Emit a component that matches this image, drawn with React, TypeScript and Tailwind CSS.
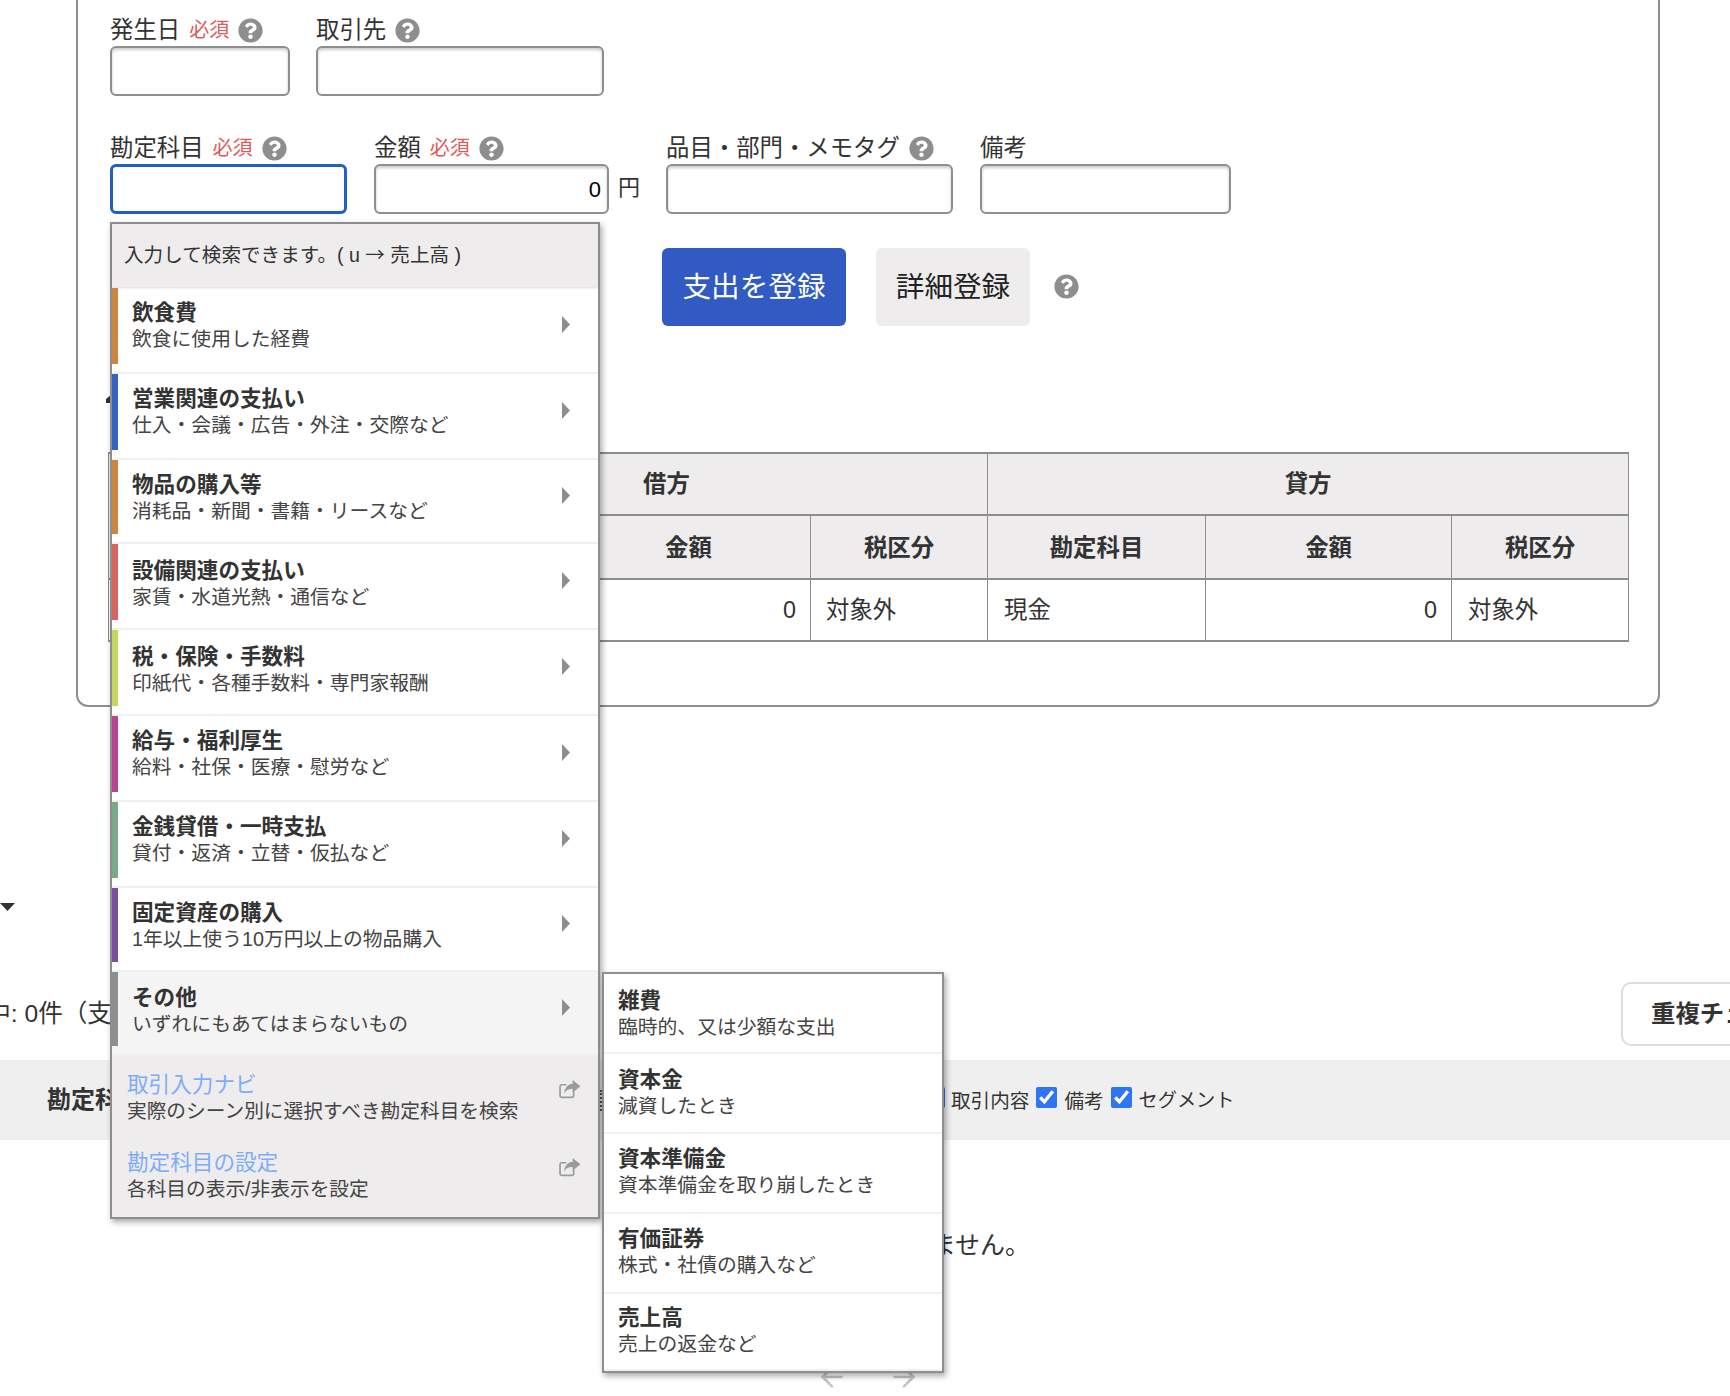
import React from 'react';
import { ArrowLeft, ArrowRight } from 'lucide-react';
import { FaQuestionCircle } from 'react-icons/fa';

const categories = [
  { title: '飲食費', desc: '飲食に使用した経費', bar: 'bg-[#cd853f]', h: 'h-[86px]', pt: 'pt-[12px]' },
  { title: '営業関連の支払い', desc: '仕入・会議・広告・外注・交際など', bar: 'bg-[#3560c6]', h: 'h-[86px]', pt: 'pt-[12px]' },
  { title: '物品の購入等', desc: '消耗品・新聞・書籍・リースなど', bar: 'bg-[#cd853f]', h: 'h-[84px]', pt: 'pt-[12px]' },
  { title: '設備関連の支払い', desc: '家賃・水道光熱・通信など', bar: 'bg-[#d9625e]', h: 'h-[86px]', pt: 'pt-[14px]' },
  { title: '税・保険・手数料', desc: '印紙代・各種手数料・専門家報酬', bar: 'bg-[#c5d65f]', h: 'h-[86px]', pt: 'pt-[14px]' },
  { title: '給与・福利厚生', desc: '給料・社保・医療・慰労など', bar: 'bg-[#b8458f]', h: 'h-[86px]', pt: 'pt-[12px]' },
  { title: '金銭貸借・一時支払', desc: '貸付・返済・立替・仮払など', bar: 'bg-[#7aa987]', h: 'h-[86px]', pt: 'pt-[12px]' },
  { title: '固定資産の購入', desc: '1年以上使う10万円以上の物品購入', bar: 'bg-[#7a4fa0]', h: 'h-[84px]', pt: 'pt-[12px]' },
  { title: 'その他', desc: 'いずれにもあてはまらないもの', bar: 'bg-[#8e8e8e]', h: 'h-[84px]', pt: 'pt-[13px]', active: true },
];

const subItems = [
  { title: '雑費', desc: '臨時的、又は少額な支出', pt: 'pt-[14px]' },
  { title: '資本金', desc: '減資したとき', pt: 'pt-[13px]' },
  { title: '資本準備金', desc: '資本準備金を取り崩したとき', pt: 'pt-[12px]' },
  { title: '有価証券', desc: '株式・社債の購入など', pt: 'pt-[12px]' },
  { title: '売上高', desc: '売上の返金など', pt: 'pt-[11px]' },
];

const Help = () => <FaQuestionCircle size={25} className="shrink-0 text-[#8e8e8e]" />;

const ShareIcon = () => (
  <svg width="22" height="19" viewBox="0 0 21 18" className="mt-[9px] shrink-0 text-[#9b9b9b]">
    <path d="M14 11v4a1.5 1.5 0 0 1-1.5 1.5h-10A1.5 1.5 0 0 1 1 15V6a1.5 1.5 0 0 1 1.5-1.5H7" fill="none" stroke="currentColor" strokeWidth="1.6" />
    <path d="M13 0L20.5 6L13 12V8.5C9 8.5 6.5 9.5 5 13C5 8 8 4 13 3.5Z" fill="currentColor" />
  </svg>
);

const Field = ({ label, required, help, className, children }: {
  label: string;
  required?: boolean;
  help?: boolean;
  className: string;
  children: React.ReactNode;
}) => (
  <div className={className}>
    <div className="flex h-[30px] items-center gap-[9px] whitespace-nowrap pb-[2px] text-[23.4px] leading-[28px]">
      <span>{label}</span>
      {required && <span className="text-[20px] text-[#e05a5a]">必須</span>}
      {help && <Help />}
    </div>
    {children}
  </div>
);

const inputClass = 'block h-[50px] w-full rounded-[6px] border-2 border-[#8e8e8e] bg-white shadow-[inset_0_2px_3px_rgba(0,0,0,0.2)]';

const th = 'border-x border-y-2 border-[#8e8e8e] bg-[#eeeced] pt-[2px] text-center text-[23.4px] font-bold';
const td = 'border-x border-y-2 border-[#8e8e8e] pt-[2px] text-[23.4px] font-normal';

const App: React.FC = () => {
  return (
    <div className="relative h-[1396px] w-[1730px] overflow-hidden bg-white font-['Liberation_Sans','Noto_Sans_CJK_JP',sans-serif] text-[#333]">
      <div className="ml-[76px] h-[707px] w-[1584px] rounded-b-[12px] border-x-2 border-b-2 border-[#8e8e8e] pl-[32px] pt-[16px]">
        <div className="flex gap-[26px]">
          <Field label="発生日" required help className="w-[180px]">
            <input className={inputClass} />
          </Field>
          <Field label="取引先" help className="w-[288px]">
            <input className={inputClass} />
          </Field>
        </div>

        <div className="mt-[38px] flex">
          <Field label="勘定科目" required help className="w-[237px]">
            <input className="block h-[50px] w-full rounded-[6px] border-[3px] border-[#215fc7] bg-white" />
          </Field>
          <Field label="金額" required help className="ml-[27px] w-[264px]">
            <div className="flex items-center whitespace-nowrap">
              <input
                readOnly
                value="0"
                className={`${inputClass} !w-[235px] shrink-0 pr-[6px] pt-[1px] text-right text-[22px] text-black`}
              />
              <span className="mb-[4px] ml-[9px] text-[22px]">円</span>
            </div>
          </Field>
          <Field label="品目・部門・メモタグ" help className="ml-[28px] w-[287px]">
            <input className={inputClass} />
          </Field>
          <Field label="備考" className="ml-[27px] w-[251px]">
            <input className={inputClass} />
          </Field>
        </div>

        <div className="ml-[552px] mt-[34px] flex h-[78px] items-center">
          <button className="h-full w-[184px] rounded-[6px] bg-[#315bc3] text-[28.6px] text-white">支出を登録</button>
          <button className="ml-[30px] h-full w-[154px] rounded-[6px] bg-[#eeeced] text-[28.6px] text-[#222]">詳細登録</button>
          <span className="mb-[2px] ml-[24px]"><Help /></span>
        </div>

        <table className="ml-[-2px] mt-[126px] w-[1520px] table-fixed border-collapse">
          <colgroup>
            <col className="w-[237px]" />
            <col className="w-[221px]" />
            <col className="w-[244px]" />
            <col className="w-[177px]" />
            <col className="w-[218px]" />
            <col className="w-[246px]" />
            <col className="w-[177px]" />
          </colgroup>
          <thead>
            <tr className="h-[62px]">
              <th rowSpan={2} className={th} />
              <th colSpan={3} className={th}>借方</th>
              <th colSpan={3} className={th}>貸方</th>
            </tr>
            <tr className="h-[64px]">
              <th className={th} />
              <th className={`${th} !pt-[4px]`}>金額</th>
              <th className={`${th} !pt-[4px]`}>税区分</th>
              <th className={`${th} !pt-[4px]`}>勘定科目</th>
              <th className={`${th} !pt-[4px]`}>金額</th>
              <th className={`${th} !pt-[4px]`}>税区分</th>
            </tr>
          </thead>
          <tbody>
            <tr className="h-[62px]">
              <td className={td} />
              <td className={td} />
              <td className={`${td} pr-[14px] text-right`}>0</td>
              <td className={`${td} pl-[15px]`}>対象外</td>
              <td className={`${td} pl-[16px]`}>現金</td>
              <td className={`${td} pr-[14px] text-right`}>0</td>
              <td className={`${td} pl-[16px]`}>対象外</td>
            </tr>
          </tbody>
        </table>
      </div>

      <svg width="15" height="8" viewBox="0 0 15 8" className="mt-[196px] block">
        <polygon points="0,0 15,0 7.5,8" fill="#333" />
      </svg>

      <div className="mt-[71px] flex h-[64px] items-center justify-between">
        <span className="ml-[-63px] whitespace-nowrap text-[24.6px]">表示中: 0件（支出 0件、収入 0件）</span>
        <button className="mr-[-120px] h-full w-[229px] whitespace-nowrap rounded-[10px] border-2 border-[#dddddd] pl-[28px] text-left text-[24.4px] font-bold">重複チェック</button>
      </div>

      <div className="mt-[14px] flex h-[80px] items-center bg-[#efefef] pl-[47px]">
        <span className="w-[553px] text-[24px] font-bold">勘定科目</span>
        <span className="h-[21px] w-[2px] border-l-2 border-dotted border-[#555]" />
        <input type="checkbox" readOnly checked className="mb-[6px] ml-[322px] h-[21px] w-[21px] accent-[#2f74f0]" />
        <span className="ml-[6px] mt-[3px] text-[19.6px]">取引内容</span>
        <input type="checkbox" readOnly checked className="mb-[6px] ml-[7px] h-[21px] w-[21px] accent-[#2f74f0]" />
        <span className="ml-[7px] mt-[3px] text-[19.6px]">備考</span>
        <input type="checkbox" readOnly checked className="mb-[6px] ml-[7px] h-[21px] w-[21px] accent-[#2f74f0]" />
        <span className="ml-[7px] mt-[3px] text-[19.2px]">セグメント</span>
      </div>

      <p className="mt-[87px] pl-[6px] text-center text-[25px] leading-[36px]">該当する取引がありません。</p>

      <div className="mt-[98px] flex justify-center gap-[40px] pl-[6px] text-[#c4c4c4]">
        <ArrowLeft size={32} />
        <ArrowRight size={32} />
      </div>

      {/* small mark of the hidden heading, sticking out left of the menu */}
      <svg width="5" height="8" viewBox="0 0 5 8" className="absolute left-[106px] top-[395px]">
        <polygon points="5,0 5,8 0,8 0,4" fill="#333" />
      </svg>

      {/* account menu */}
      <div className="absolute left-[110px] top-[222px] w-[490px] border-2 border-[#8e8e8e] bg-white shadow-[2px_3px_6px_rgba(0,0,0,0.35)]">
        <div className="flex h-[63px] items-center bg-[#eeeced] pb-[2px] pl-[12px] text-[19.6px] shadow-[0_1px_2px_rgba(0,0,0,0.15)]">
          <span>入力して検索できます。( u <span className="font-['Noto_Sans_CJK_JP']">→</span> 売上高 )</span>
        </div>
        <div className="pt-[1px]">
          {categories.map(c => (
            <div key={c.title} className={`${c.h} border-b-2 border-[#f0f0f0] pb-[8px] ${c.active ? 'bg-[#f5f4f5]' : ''}`}>
              <div className="flex h-full items-center">
                <div className={`h-full w-[6px] ${c.bar}`} />
                <div className={`ml-[14px] h-full flex-1 ${c.pt}`}>
                  <div className="text-[21.6px] font-bold leading-[26px]">{c.title}</div>
                  <div className="text-[19.8px] leading-[26px] text-[#444]">{c.desc}</div>
                </div>
                <svg width="8" height="17" viewBox="0 0 8 17" className="mb-[3px] mr-[28px]">
                  <polygon points="0,0 8,8.5 0,17" fill="#8e8e8e" />
                </svg>
              </div>
            </div>
          ))}
        </div>
        <div className="bg-[#eeeced]">
          {[
            { title: '取引入力ナビ', desc: '実際のシーン別に選択すべき勘定科目を検索', h: 'h-[80px]', pt: 'pt-[15px]' },
            { title: '勘定科目の設定', desc: '各科目の表示/非表示を設定', h: 'h-[81px]', pt: 'pt-[13px]' },
          ].map(l => (
            <div key={l.title} className={`${l.h} ${l.pt} flex items-start pl-[15px] pr-[17px]`}>
              <div className="flex-1">
                <div className="text-[21.6px] leading-[27px] text-[#7facf7]">{l.title}</div>
                <div className="text-[19.7px] leading-[26px] text-[#444]">{l.desc}</div>
              </div>
              <ShareIcon />
            </div>
          ))}
        </div>
      </div>

      {/* sub menu of その他 */}
      <div className="absolute left-[602px] top-[972px] w-[342px] border-2 border-[#8e8e8e] bg-white shadow-[2px_3px_6px_rgba(0,0,0,0.35)]">
        {subItems.map((s, i) => (
          <div key={s.title} className={`${i === 4 ? 'h-[77px]' : 'h-[80px]'} ${s.pt} border-b-2 border-[#f0f0f0] pl-[14px]`}>
            <div className="text-[21.6px] font-bold leading-[26px]">{s.title}</div>
            <div className="text-[19.8px] leading-[26px] text-[#444]">{s.desc}</div>
          </div>
        ))}
      </div>
    </div>
  );
};

export default App;
